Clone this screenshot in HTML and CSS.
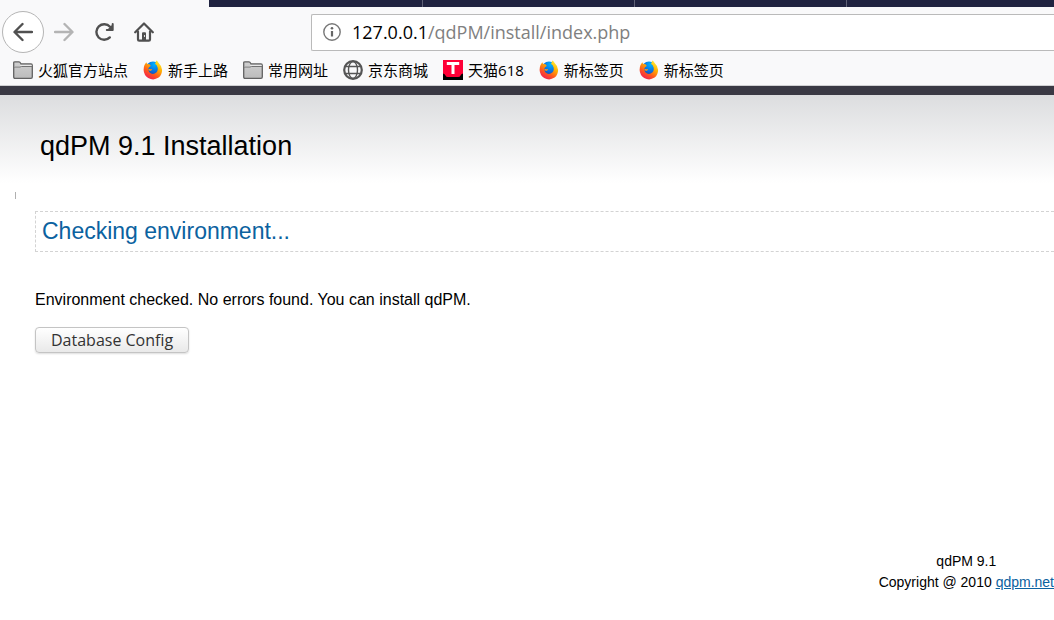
FILE: index.html
```html
<!DOCTYPE html>
<html lang="zh-CN">
<head>
<meta charset="utf-8">
<title>qdPM 9.1 Installation</title>
<link rel="stylesheet" href="styles.css">
</head>
<body>
<svg class="defs" width="0" height="0" aria-hidden="true">
  <defs>
    <linearGradient id="flame" x1="0.8" y1="0" x2="0.2" y2="1">
      <stop offset="0" stop-color="#fff03a"/>
      <stop offset="0.35" stop-color="#ffb000"/>
      <stop offset="0.65" stop-color="#ff5a1c"/>
      <stop offset="1" stop-color="#f0145a"/>
    </linearGradient>
    <radialGradient id="globe-blue" cx="0.6" cy="0.2" r="0.9">
      <stop offset="0" stop-color="#00b4ff"/>
      <stop offset="0.5" stop-color="#0a6fe0"/>
      <stop offset="1" stop-color="#2a2f80"/>
    </radialGradient>
    <linearGradient id="folder-fill" x1="0" y1="0" x2="0" y2="1">
      <stop offset="0" stop-color="#d0d0d0"/>
      <stop offset="1" stop-color="#bcbcbc"/>
    </linearGradient>
    <symbol id="firefox" viewBox="0 0 20 20">
      <circle cx="10" cy="9" r="7.500" fill="url(#globe-blue)"/>
      <path d="M1.500 5 L3.300 2.200 L4.200 4.200 Q5.500 3.600 6.800 4.400 L7.800 5.900 L6 7.200 L5.200 9 Q5.400 12.400 8 13.600 Q11 14.600 13.300 12.600 Q15.300 10.400 14.600 7.600 Q14 5 12 3.800 Q12.800 2.500 13.200 .4 Q15 1 15.600 3 Q18.600 5.500 19.100 10 Q19 15 15.600 17.600 Q10.500 21 5.200 18 Q.8 15 .6 10 Q.6 7 1.500 5Z" fill="url(#flame)"/>
      <path d="M5.200 8.800 Q7 9.600 9.300 8.900 Q9 10.500 7 11 Q5.600 10.400 5.200 8.800Z" fill="#ff9a12"/>
    </symbol>
    <symbol id="folder" viewBox="0 0 20 18">
      <path d="M.7 16 V2 Q.7 .8 2 .8 H6 Q7 .8 7.500 2 L8.200 3 H18 Q19.300 3 19.300 4.500 V16 Q19.300 17.300 18 17.300 H2 Q.7 17.300 .7 16Z" fill="url(#folder-fill)" stroke="#626262" stroke-width="1.300"/>
      <path d="M1.400 5 H6.500 L8 3.700 H18.600 V5.200 H8.500 L7 6 H1.400Z" fill="#e9e9e9"/>
      <path d="M1 6 H7 L8.500 5.500 H19" fill="none" stroke="#737373"/>
    </symbol>
  </defs>
</svg>

<header class="browser">
  <div class="tab-strip">
    <div class="tab tab-active"></div>
    <div class="tab"></div>
    <div class="tab"></div>
    <div class="tab"></div>
    <div class="tab tab-last"></div>
  </div>
  <div class="toolbar">
    <nav class="nav-buttons" aria-label="Navigation">
      <button class="nav-button back" type="button" aria-label="Back">
        <svg width="20" height="20" viewBox="0 0 20 20"><path d="M19 10 H2 M9.500 2 L1.500 10 L9.500 18" fill="none" stroke="#505050" stroke-width="2.400" stroke-linecap="round" stroke-linejoin="round"/></svg>
      </button>
      <button class="nav-button" type="button" aria-label="Forward">
        <svg width="20" height="20" viewBox="0 0 20 20"><path d="M1 10 H18 M10.500 2 L18.500 10 L10.500 18" fill="none" stroke="#b4b4b4" stroke-width="2.400" stroke-linecap="round" stroke-linejoin="round"/></svg>
      </button>
      <button class="nav-button" type="button" aria-label="Reload">
        <svg width="20" height="20" viewBox="0 0 20 20"><path d="M15.800 15.400 A7.800 7.800 0 1 1 16 4.800" fill="none" stroke="#505050" stroke-width="2.400" stroke-linecap="round"/><path d="M18.700 2 V8 H12.800" fill="none" stroke="#505050" stroke-width="2" stroke-linecap="round" stroke-linejoin="round"/><path d="M19 2 V8 H13Z" fill="#505050"/></svg>
      </button>
      <button class="nav-button" type="button" aria-label="Home">
        <svg width="20" height="20" viewBox="0 0 20 20"><path d="M1.200 10.300 L10 1.500 L18.800 10.300 M4 9.500 V17.500 Q4 18.700 5.200 18.700 H14.800 Q16 18.700 16 17.500 V9.500" fill="none" stroke="#505050" stroke-width="2.200" stroke-linecap="round" stroke-linejoin="round"/><path d="M8 18 V11.300 Q8 10.300 9 10.300 H11 Q12 10.300 12 11.300 V18Z" fill="#505050"/><path d="M10.500 13 v2" stroke="#ddd"/></svg>
      </button>
    </nav>
    <div class="address-bar">
      <svg width="18" height="18" viewBox="0 0 18 18" aria-hidden="true"><circle cx="9" cy="9" r="8.200" fill="none" stroke="#777" stroke-width="1.400"/><path d="M9 8 V13.500" stroke="#666" stroke-width="2.200"/><circle cx="9" cy="5.200" r="1.300" fill="#666"/></svg>
      <span class="address"><span class="address-host">127.0.0.1</span>/qdPM/install/index.php</span>
    </div>
  </div>
  <nav class="bookmarks" aria-label="Bookmarks">
    <a class="bookmark" href="#"><svg width="20" height="18"><use href="#folder"/></svg>火狐官方站点</a>
    <a class="bookmark" href="#"><svg width="20" height="20"><use href="#firefox"/></svg>新手上路</a>
    <a class="bookmark" href="#"><svg width="20" height="18"><use href="#folder"/></svg>常用网址</a>
    <a class="bookmark" href="#"><svg width="20" height="20" viewBox="0 0 20 20"><g fill="none" stroke="#555"><circle cx="10" cy="10" r="8.800" stroke-width="2.200"/><ellipse cx="10" cy="10" rx="4.500" ry="8.500" stroke-width="1.400"/><path d="M2 6.500 H18 M2 13.500 H18" stroke-width="1.300"/></g></svg>京东商城</a>
    <a class="bookmark" href="#"><svg width="20" height="20" viewBox="0 0 20 20"><path d="M0 0 H20 V20 H0Z"/><path d="M0 0 H20 V13.500 Q18 14 17.500 15.500 Q17 17 15 17 H5 Q3 17 2.500 15.500 Q2 14 0 13.500Z" fill="#ff0036"/><path d="M3.800 3.500 H16.200 M10 3 V14" stroke="#fff" stroke-width="3"/></svg>天猫618</a>
    <a class="bookmark" href="#"><svg width="20" height="20"><use href="#firefox"/></svg>新标签页</a>
    <a class="bookmark" href="#"><svg width="20" height="20"><use href="#firefox"/></svg>新标签页</a>
  </nav>
</header>

<div class="page">
  <header class="page-header"><h1 class="page-title">qdPM 9.1 Installation</h1></header>
  <div class="marker"></div>
  <main class="content">
    <h2 class="step-title">Checking environment...</h2>
    <p class="message">Environment checked. No errors found. You can install qdPM.</p>
    <button class="action" type="button">Database Config</button>
  </main>
  <footer class="footer">
    <div class="credits">qdPM 9.1<br>Copyright @ 2010 <a class="link" href="#">qdpm.net</a></div>
  </footer>
</div>
</body>
</html>
```

FILE: styles.css
```css
* {
  box-sizing: border-box;
}

body {
  margin: 0;
  min-height: 100vh;
  display: flex;
  flex-direction: column;
  overflow: hidden;
  background: #fff;
  color: #000;
  font-family: "Liberation Sans", Arial, sans-serif;
}

svg {
  display: block;
  flex: none;
}

.defs {
  position: absolute;
}

.browser {
  background: #f9f9fa;
  border-bottom: 1px solid #d0d0d2;
}

.tab-strip {
  display: flex;
  height: 7px;
  background: #202340;
}

.tab {
  flex: 0 0 212px;
  border-right: 1px solid #5f6176;
}

.tab-active {
  flex-basis: 209px;
  margin-right: 2px;
  border: 0;
  background: #f9f9fa;
}

.tab-last {
  border: 0;
}

.toolbar {
  display: flex;
  align-items: center;
  height: 50px;
}

.nav-buttons {
  display: flex;
  align-items: center;
  flex: 0 0 311px;
  padding-left: 2px;
}

.nav-button {
  display: grid;
  place-items: center;
  width: 40px;
  height: 42px;
  padding: 0;
  border: 0;
  background: none;
}

.back {
  width: 42px;
  border: 1px solid #b5b5b5;
  border-radius: 50%;
  background: #fff;
}

.address-bar {
  display: flex;
  align-items: center;
  flex: 1;
  gap: 11px;
  height: 37px;
  padding-left: 11px;
  border: 1px solid #bababa;
  border-right: 0;
  border-radius: 2px 0 0 2px;
  background: #fff;
}

.address {
  color: #808080;
  font: 18px/24px "Open Sans", "Noto Sans", sans-serif;
}

.address-host {
  color: #000;
}

.bookmarks {
  display: flex;
  align-items: center;
  gap: 15px;
  height: 28px;
  padding: 0 0 2px 13px;
}

.bookmark {
  display: flex;
  align-items: center;
  gap: 5px;
  color: #000;
  font: 15px/20px "Open Sans", "Noto Sans CJK SC", sans-serif;
  text-decoration: none;
  white-space: nowrap;
}

.page {
  display: flex;
  flex: 1;
  flex-direction: column;
  border-top: 9px solid #3a3944;
}

.page-header {
  height: 97px;
  padding: 35px 40px 0;
  background: linear-gradient(#dcdddf, #fff 88px);
}

.page-title {
  margin: 0;
  font-size: 27px;
  font-weight: 400;
  line-height: 32px;
}

.marker {
  width: 1px;
  height: 7px;
  margin-left: 15px;
  background: #b0b0b0;
}

.content {
  padding: 12px 0 0 35px;
}

.step-title {
  margin: 0;
  padding: 5px 6px;
  border: 1px dashed #d3d3d3;
  border-right: 0;
  color: #0b62a0;
  font-size: 23px;
  font-weight: 400;
  line-height: 29px;
}

.message {
  margin: 38px 0 17px;
  font-size: 16px;
  line-height: 20px;
}

.action {
  height: 26px;
  padding: 0 15px;
  border: 1px solid #c4c4c4;
  border-radius: 4px;
  background: linear-gradient(#fff, #e9e9e9);
  box-shadow: 0 1px 2px #ddd;
  color: #333;
  font: 16px/24px "Open Sans", "Noto Sans", sans-serif;
}

.footer {
  display: flex;
  justify-content: flex-end;
  margin-top: auto;
  padding-bottom: 27px;
}

.credits {
  font-size: 14px;
  line-height: 21px;
  text-align: center;
  white-space: nowrap;
}

.link {
  color: #0b62a0;
}
```
